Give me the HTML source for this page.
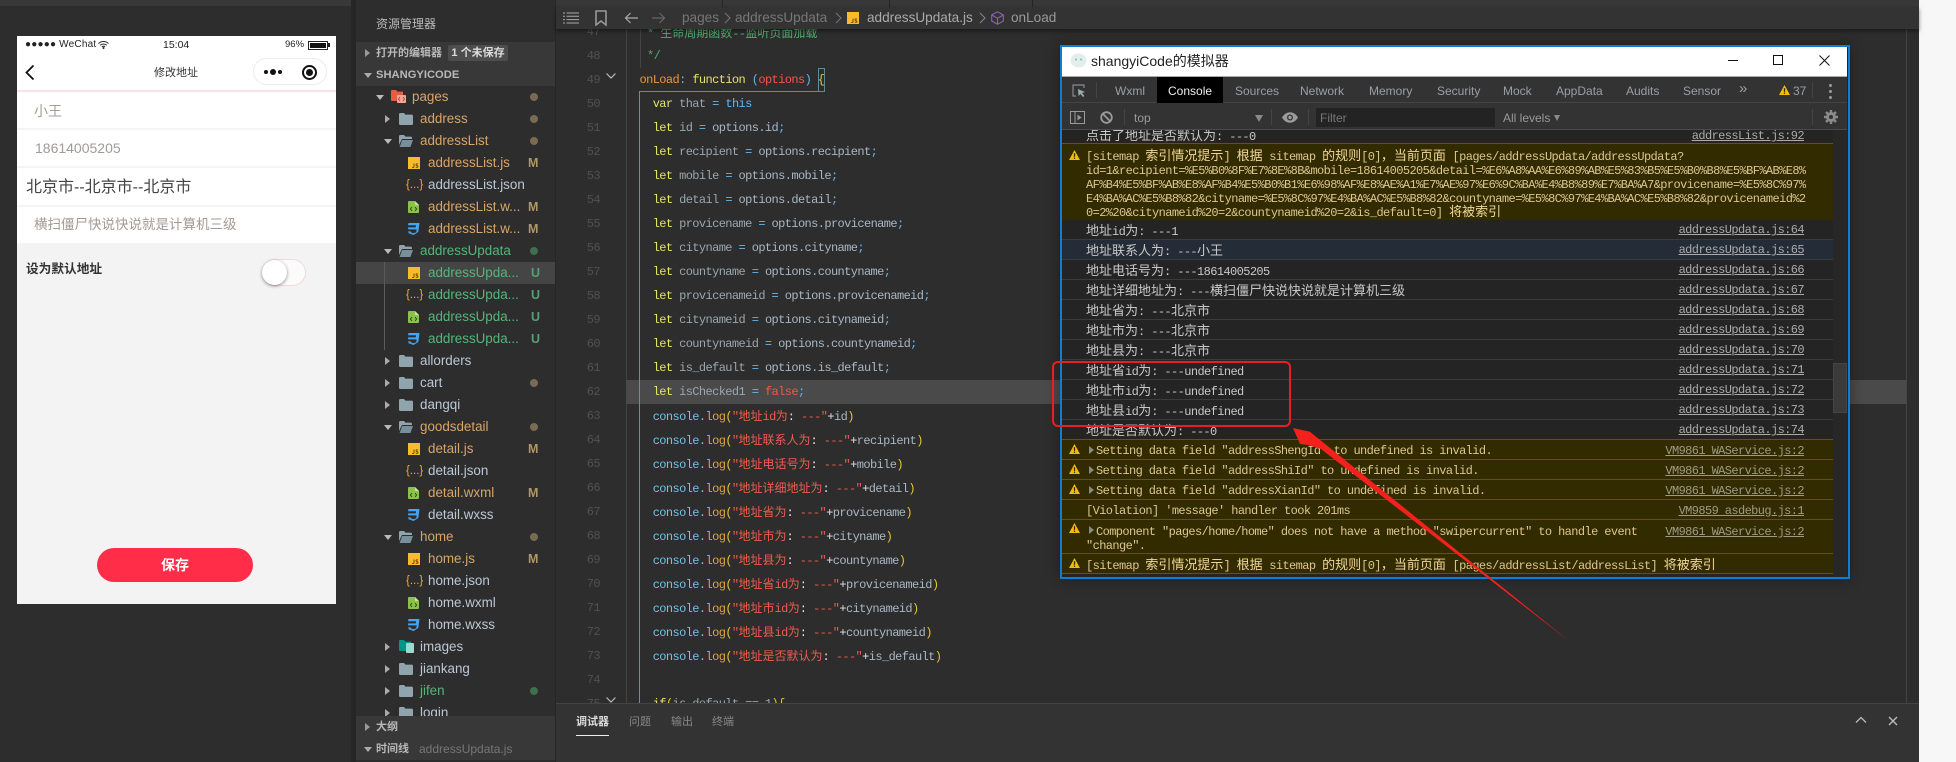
<!DOCTYPE html>
<html><head><meta charset="utf-8"><title>shangyiCode</title>
<style>
html,body{margin:0;padding:0}
body{width:1956px;height:762px;position:relative;overflow:hidden;background:#2d2d2d;font-family:"Liberation Sans","Noto Sans CJK SC",sans-serif}
div,span.a,svg.a{position:absolute}
i{font-style:normal;letter-spacing:0;font-family:"Noto Sans CJK SC",sans-serif}
.nw{white-space:nowrap}
.pt{white-space:nowrap;line-height:20px;height:20px}
.r{left:0;width:199px;height:22px;line-height:22px;font-size:13.4px;white-space:nowrap;color:#bcc8d6}
.r span{position:absolute;top:0}
.r svg{position:absolute}
.t{color:#d9a566}.g{color:#55b67c}
.dot{position:absolute;left:174px;top:7px;width:8px;height:8px;border-radius:4px;background:#7b6a52}
.dg{background:#3f6f4c}
.M{position:absolute;left:172px;top:0;font-weight:bold;color:#ae9768;font-size:12.5px}
.U{position:absolute;left:175px;top:0;font-weight:bold;color:#56a078;font-size:12.5px}
.arr{position:absolute;width:0;height:0;border-left:5px solid #aaa;border-top:4px solid transparent;border-bottom:4px solid transparent;top:7px}
.arrd{position:absolute;width:0;height:0;border-top:5px solid #bbb;border-left:4px solid transparent;border-right:4px solid transparent;top:9px}
.r span.jn{position:absolute;color:#f0ad1e;font-family:"Liberation Sans",sans-serif;font-size:11.5px;top:0}
.ln{left:560px;width:40px;text-align:right;height:24px;font:12px/24px "Liberation Mono",monospace;color:#515151;letter-spacing:-.6px}
.c{left:0;height:24px;white-space:pre;font:12px/24px "Liberation Mono",monospace;letter-spacing:-.6px;color:#9aa7ae}
.c i{font-size:12px}
.k{color:#e6e36a}.o{color:#a9b7c4}.h{color:#63b6f0}.cn{color:#6cc3ea}.l{color:#e8a13c}.s,.s i{color:#f05c50}.p{color:#e7c531}.w{color:#e4e4e4}.f{color:#f0953d}.q{color:#f05a44}.cm,.cm i{color:#4fae6c}
.cr{left:1062px;width:771px;height:19px;border-bottom:1px solid #3b3b3b;background:#242424;color:#c8c8c8;font:12px/20px "Liberation Mono",monospace;letter-spacing:-.6px;white-space:pre;overflow:hidden}
.cr i{font-size:13px}
.cr b{font-weight:normal;position:absolute;left:24px;top:0}
.cr u{position:absolute;right:29px;top:0;color:#ababab}
.yr{background:#332b00;border-bottom:1px solid #665500;color:#dcc68f}
.yr u{color:#9e9a86}
.yr i{color:#f0d796}
.yr b.x{left:34px}
.yb i{line-height:0}
.tri{position:absolute;left:7px;top:4px}
.ma{position:absolute;left:27px;top:6px;width:0;height:0;border-left:5px solid #8a8a80;border-top:4px solid transparent;border-bottom:4px solid transparent}
.ct{top:81px;height:20px;line-height:20px;font-size:12px;color:#98a0a6;white-space:nowrap}
.hd{font-size:11px;color:#b8b8b8;font-weight:bold}
</style></head>
<body>
<svg width="0" height="0" style="position:absolute">
<defs>
<symbol id="fc" viewBox="0 0 14 12"><path d="M0 1.2C0 .5.5 0 1.2 0H5l1.4 1.6h6.4c.7 0 1.2.5 1.2 1.2v8c0 .7-.5 1.2-1.2 1.2H1.2C.5 12 0 11.5 0 10.8z" fill="#90a4ae"/></symbol>
<symbol id="fo" viewBox="0 0 14 12"><path d="M0 1.2C0 .5.5 0 1.2 0H5l1.4 1.6h5.4c.7 0 1.2.5 1.2 1.2V4H3L0 10z" fill="#90a4ae"/><path d="M3.2 5H14l-2.6 7H.6z" fill="#78909c"/></symbol>
<symbol id="js" viewBox="0 0 12 12"><rect width="12" height="12" fill="#f9bb2d"/><path d="M6 6.5v3.3c0 .8-1.2 1-1.8.4M10 7.2c-.8-.7-2-.4-2 .5 0 1 2 .8 2 1.8 0 .9-1.4 1.1-2.2.4" fill="none" stroke="#5a4300" stroke-width=".9"/></symbol>
<symbol id="xm" viewBox="0 0 11 12"><path d="M1 0h6l4 4v7c0 .6-.4 1-1 1H1c-.6 0-1-.4-1-1V1c0-.6.4-1 1-1z" fill="#8bc34a"/><path d="M7 0v4h4z" fill="#c5e1a5"/><path d="M4 6L2.4 8 4 10M7 6l1.6 2L7 10" fill="none" stroke="#2f4a16" stroke-width="1"/></symbol>
<symbol id="xs" viewBox="0 0 13 12"><path d="M1.5 0h11l-1.2 9L6.5 12 1.6 10.3l-.3-2h2.2l.1 1 2.8.9 2.9-1 .3-2.8H1.2L1 4.4h7.8l.2-2.2H1z" fill="#42a5f5"/></symbol>
<symbol id="wt" viewBox="0 0 12 11"><path d="M6 0l6 11H0z" fill="#f4bd00"/><rect x="5.3" y="3.5" width="1.4" height="4" fill="#332b00"/><rect x="5.3" y="8.3" width="1.4" height="1.5" fill="#332b00"/></symbol>
</defs>
</svg>

<!-- top strip -->
<div style="left:0;top:0;width:1919px;height:6px;background:#383838"></div>
<div style="left:1919px;top:0;width:37px;height:762px;background:#f7f7f7"></div>
<div style="left:351px;top:0;width:5px;height:762px;background:#262626"></div>

<!-- phone -->
<div style="left:17px;top:36px;width:319px;height:568px;background:#f3f3f3;overflow:hidden">
  <div style="left:0;top:0;width:319px;height:207px;background:#fff"></div>
  <div class="pt" style="left:8px;top:-1px;font-size:10px;color:#222;letter-spacing:.2px">●●●●● WeChat</div>
  <svg class="a" style="left:81px;top:5px" width="11" height="8" viewBox="0 0 11 8"><path d="M.5 2.5C3.5-.3 7.5-.3 10.5 2.5M2.2 4.2C4 2.6 7 2.6 8.8 4.2M3.9 5.8C4.7 5 6.3 5 7.1 5.8" fill="none" stroke="#222" stroke-width="1"/><circle cx="5.5" cy="7" r="1" fill="#222"/></svg>
  <div class="pt" style="left:146px;top:-1px;font-size:10.5px;color:#222">15:04</div>
  <div class="pt" style="left:268px;top:-1px;font-size:9.5px;color:#222">96%</div>
  <div style="left:291px;top:5px;width:18px;height:7px;border:1px solid #222;background:#111;box-shadow:inset 0 0 0 1px #fff"></div>
  <div style="left:311px;top:7px;width:2px;height:4px;background:#222"></div>
  <div style="left:0;top:17px;width:319px;height:37px;border-bottom:2px solid #f9e3e6;box-sizing:content-box"></div>
  <svg class="a" style="left:8px;top:28px" width="10" height="17" viewBox="0 0 10 17"><path d="M8.5 1.5L1.5 8.5l7 7" fill="none" stroke="#111" stroke-width="1.8"/></svg>
  <div class="pt" style="left:137px;top:27px;font-size:11px;color:#333">修改地址</div>
  <div style="left:236px;top:22px;width:72px;height:25px;border:1px solid #ececec;border-radius:14px"></div>
  <div style="left:247px;top:34px;width:4px;height:4px;border-radius:3px;background:#111"></div>
  <div style="left:253px;top:33px;width:6px;height:6px;border-radius:3px;background:#111"></div>
  <div style="left:261px;top:34px;width:4px;height:4px;border-radius:3px;background:#111"></div>
  <div style="left:285px;top:29px;width:11px;height:11px;border:2px solid #111;border-radius:50%"></div>
  <div style="left:289px;top:33px;width:7px;height:7px;border-radius:50%;background:#111"></div>
  <div class="pt" style="left:17px;top:65px;font-size:14px;color:#a89c96">小王</div>
  <div style="left:0;top:92px;width:319px;height:2px;background:#f5f3f3"></div>
  <div class="pt" style="left:18px;top:102px;font-size:14px;color:#a09a98">18614005205</div>
  <div style="left:0;top:130px;width:319px;height:2px;background:#f5f3f3"></div>
  <div class="pt" style="left:9px;top:142px;font-size:16px;color:#444">北京市--北京市--北京市</div>
  <div style="left:0;top:169px;width:319px;height:2px;background:#f5f3f3"></div>
  <div class="pt" style="left:17px;top:179px;font-size:13.5px;color:#a39a94">横扫僵尸快说快说就是计算机三级</div>
  <div class="pt" style="left:9px;top:223px;font-size:12.7px;font-weight:bold;color:#333">设为默认地址</div>
  <div style="left:245px;top:223px;width:42px;height:25px;border:1px solid #f2dada;border-radius:14px;background:#fbfbfb"></div>
  <div style="left:245px;top:224px;width:25px;height:25px;border-radius:50%;background:#fff;box-shadow:0 1px 3px rgba(0,0,0,.45)"></div>
  <div style="left:80px;top:512px;width:156px;height:34px;border-radius:17px;background:#ff2d48;color:#fff;font-size:14px;font-weight:bold;text-align:center;line-height:34px">保存</div>
</div>

<!-- sidebar -->
<div style="left:356px;top:0;width:199px;height:760px;background:#2d2d2d;overflow:hidden">
  <div class="nw" style="left:20px;top:14px;font-size:12px;line-height:20px;color:#bbb">资源管理器</div>
  <div style="left:0;top:42px;width:199px;height:44px;background:#383838"></div>
  <div class="r hd" style="top:42px"><div class="arr" style="left:9px;border-left-color:#999"></div><span style="left:20px">打开的编辑器</span><span style="left:92px;top:3px;height:16px;line-height:16px;width:60px;text-align:center;background:#4d4d4d;border-radius:2px;color:#ddd">1 个未保存</span></div>
  <div class="r" style="top:64px;font-size:11.2px;color:#b8b8b8;font-weight:bold"><div class="arrd" style="left:8px;border-top-color:#aaa"></div><span style="left:20px">SHANGYICODE</span></div>

  <div class="r t" style="top:86px"><div class="arrd" style="left:20px"></div><svg style="left:35px;top:4px" width="15" height="13" viewBox="0 0 15 13"><path d="M0 1c0-.6.4-1 1-1h4l1.5 1.6H12V11H1c-.6 0-1-.4-1-1z" fill="#e2603f"/><rect x="6" y="5" width="9" height="8" rx="1" fill="#f6a598"/><path d="M9 7L7.5 9 9 11M12 7l1.5 2L12 11" fill="none" stroke="#c33" stroke-width=".9"/></svg><span style="left:56px">pages</span><div class="dot"></div></div>
  <div class="r t" style="top:108px"><div class="arr" style="left:29px"></div><svg style="left:43px;top:5px" width="14" height="12"><use href="#fc"/></svg><span style="left:64px">address</span><div class="dot"></div></div>
  <div class="r t" style="top:130px"><div class="arrd" style="left:28px"></div><svg style="left:43px;top:5px" width="14" height="12"><use href="#fo"/></svg><span style="left:64px">addressList</span><div class="dot"></div></div>
  <div class="r t" style="top:152px"><svg style="left:52px;top:5px" width="12" height="12"><use href="#js"/></svg><span style="left:72px">addressList.js</span><b class="M">M</b></div>
  <div class="r" style="top:174px"><span class="jn" style="left:50px">{...}</span><span style="left:72px">addressList.json</span></div>
  <div class="r t" style="top:196px"><svg style="left:52px;top:5px" width="11" height="12"><use href="#xm"/></svg><span style="left:72px">addressList.w...</span><b class="M">M</b></div>
  <div class="r t" style="top:218px"><svg style="left:51px;top:5px" width="13" height="12"><use href="#xs"/></svg><span style="left:72px">addressList.w...</span><b class="M">M</b></div>
  <div class="r g" style="top:240px"><div class="arrd" style="left:28px"></div><svg style="left:43px;top:5px" width="14" height="12"><use href="#fo"/></svg><span style="left:64px">addressUpdata</span><div class="dot dg"></div></div>
  <div class="r g" style="top:262px;background:#454545"><svg style="left:52px;top:5px" width="12" height="12"><use href="#js"/></svg><span style="left:72px">addressUpda...</span><b class="U">U</b></div>
  <div class="r g" style="top:284px"><span class="jn" style="left:50px">{...}</span><span style="left:72px">addressUpda...</span><b class="U">U</b></div>
  <div class="r g" style="top:306px"><svg style="left:52px;top:5px" width="11" height="12"><use href="#xm"/></svg><span style="left:72px">addressUpda...</span><b class="U">U</b></div>
  <div class="r g" style="top:328px"><svg style="left:51px;top:5px" width="13" height="12"><use href="#xs"/></svg><span style="left:72px">addressUpda...</span><b class="U">U</b></div>
  <div style="left:28px;top:262px;width:1px;height:88px;background:#5a5a5a"></div>
  <div class="r" style="top:350px"><div class="arr" style="left:29px"></div><svg style="left:43px;top:5px" width="14" height="12"><use href="#fc"/></svg><span style="left:64px">allorders</span></div>
  <div class="r" style="top:372px"><div class="arr" style="left:29px"></div><svg style="left:43px;top:5px" width="14" height="12"><use href="#fc"/></svg><span style="left:64px">cart</span><div class="dot"></div></div>
  <div class="r" style="top:394px"><div class="arr" style="left:29px"></div><svg style="left:43px;top:5px" width="14" height="12"><use href="#fc"/></svg><span style="left:64px">dangqi</span></div>
  <div class="r t" style="top:416px"><div class="arrd" style="left:28px"></div><svg style="left:43px;top:5px" width="14" height="12"><use href="#fo"/></svg><span style="left:64px">goodsdetail</span><div class="dot"></div></div>
  <div class="r t" style="top:438px"><svg style="left:52px;top:5px" width="12" height="12"><use href="#js"/></svg><span style="left:72px">detail.js</span><b class="M">M</b></div>
  <div class="r" style="top:460px"><span class="jn" style="left:50px">{...}</span><span style="left:72px">detail.json</span></div>
  <div class="r t" style="top:482px"><svg style="left:52px;top:5px" width="11" height="12"><use href="#xm"/></svg><span style="left:72px">detail.wxml</span><b class="M">M</b></div>
  <div class="r" style="top:504px"><svg style="left:51px;top:5px" width="13" height="12"><use href="#xs"/></svg><span style="left:72px">detail.wxss</span></div>
  <div class="r t" style="top:526px"><div class="arrd" style="left:28px"></div><svg style="left:43px;top:5px" width="14" height="12"><use href="#fo"/></svg><span style="left:64px">home</span><div class="dot"></div></div>
  <div class="r t" style="top:548px"><svg style="left:52px;top:5px" width="12" height="12"><use href="#js"/></svg><span style="left:72px">home.js</span><b class="M">M</b></div>
  <div class="r" style="top:570px"><span class="jn" style="left:50px">{...}</span><span style="left:72px">home.json</span></div>
  <div class="r" style="top:592px"><svg style="left:52px;top:5px" width="11" height="12"><use href="#xm"/></svg><span style="left:72px">home.wxml</span></div>
  <div class="r" style="top:614px"><svg style="left:51px;top:5px" width="13" height="12"><use href="#xs"/></svg><span style="left:72px">home.wxss</span></div>
  <div class="r" style="top:636px"><div class="arr" style="left:29px"></div><svg style="left:43px;top:4px" width="15" height="13" viewBox="0 0 15 13"><path d="M0 1c0-.6.4-1 1-1h4l1.5 1.6H12V11H1c-.6 0-1-.4-1-1z" fill="#009688"/><rect x="7" y="3" width="8" height="10" rx="1" fill="#9fd8d0"/></svg><span style="left:64px">images</span></div>
  <div class="r" style="top:658px"><div class="arr" style="left:29px"></div><svg style="left:43px;top:5px" width="14" height="12"><use href="#fc"/></svg><span style="left:64px">jiankang</span></div>
  <div class="r g" style="top:680px"><div class="arr" style="left:29px"></div><svg style="left:43px;top:5px" width="14" height="12"><use href="#fc"/></svg><span style="left:64px">jifen</span><div class="dot dg"></div></div>
  <div class="r" style="top:702px"><div class="arr" style="left:29px"></div><svg style="left:43px;top:5px" width="14" height="12"><use href="#fc"/></svg><span style="left:64px">login</span></div>
  <div style="left:0;top:716px;width:199px;height:44px;background:#383838"></div>
  <div class="r hd" style="top:716px"><div class="arr" style="left:9px;border-left-color:#999"></div><span style="left:20px">大纲</span></div>
  <div class="r hd" style="top:738px"><div class="arrd" style="left:8px;border-top-color:#aaa"></div><span style="left:20px">时间线</span><span style="left:63px;font-weight:normal;color:#777;font-size:12px">addressUpdata.js</span></div>
</div>
<div style="left:555px;top:0;width:1px;height:762px;background:#262626"></div>

<!-- editor -->
<div style="left:556px;top:0;width:1363px;height:703px;background:#2d2d2d;overflow:hidden">
  <div style="left:70px;top:0;width:1px;height:703px;background:#444"></div>
  <div style="left:1350px;top:0;width:1px;height:703px;background:#444"></div>
  <div style="left:70px;top:380px;width:1280px;height:24px;background:#4a4a4a"></div>
  <div style="left:83px;top:91px;width:1px;height:612px;background:#5b93b4"></div>
  <div style="left:84px;top:29px;width:1px;height:39px;background:#444"></div>
  <div style="left:84px;top:91px;width:184px;height:1px;background:#5b8a9c"></div>
  <div style="left:262px;top:68px;width:5px;height:23px;border:1px solid #5b8a9c;border-bottom:0"></div>
  <svg class="a" style="left:49px;top:72px" width="12" height="8" viewBox="0 0 12 8"><path d="M1.5 1.5L6 6l4.5-4.5" fill="none" stroke="#bbb" stroke-width="1.2"/></svg>
  <svg class="a" style="left:49px;top:696px" width="12" height="8" viewBox="0 0 12 8"><path d="M1.5 1.5L6 6l4.5-4.5" fill="none" stroke="#bbb" stroke-width="1.2"/></svg>
</div>
<div class="ln" style="top:20px">47</div>
<div class="ln" style="top:44px">48</div>
<div class="ln" style="top:68px">49</div>
<div class="ln" style="top:92px">50</div>
<div class="ln" style="top:116px">51</div>
<div class="ln" style="top:140px">52</div>
<div class="ln" style="top:164px">53</div>
<div class="ln" style="top:188px">54</div>
<div class="ln" style="top:212px">55</div>
<div class="ln" style="top:236px">56</div>
<div class="ln" style="top:260px">57</div>
<div class="ln" style="top:284px">58</div>
<div class="ln" style="top:308px">59</div>
<div class="ln" style="top:332px">60</div>
<div class="ln" style="top:356px">61</div>
<div class="ln" style="top:380px">62</div>
<div class="ln" style="top:404px">63</div>
<div class="ln" style="top:428px">64</div>
<div class="ln" style="top:452px">65</div>
<div class="ln" style="top:476px">66</div>
<div class="ln" style="top:500px">67</div>
<div class="ln" style="top:524px">68</div>
<div class="ln" style="top:548px">69</div>
<div class="ln" style="top:572px">70</div>
<div class="ln" style="top:596px">71</div>
<div class="ln" style="top:620px">72</div>
<div class="ln" style="top:644px">73</div>
<div class="ln" style="top:668px">74</div>
<div class="ln" style="top:692px">75</div>

<div class="c cm" style="left:647px;top:21px">* <i>生命周期函数</i>--<i>监听页面加载</i></div>
<div class="c cm" style="left:647px;top:44px">*/</div>
<div class="c" style="left:639.5px;top:68px"><span class="f">onLoad</span><span class="h">:</span> <span class="k">function</span> <span class="h">(</span><span class="q">options</span><span class="h">)</span> <span class="p">{</span></div>
<div class="c" style="left:652.7px;top:92px"><span class="k">var</span> <span>that</span> <span class="h">=</span> <span class="h">this</span></div>
<div class="c" style="left:652.7px;top:116px"><span class="k">let</span> id <span class="h">=</span> <span class="o">options.id</span><span class="h">;</span></div>
<div class="c" style="left:652.7px;top:140px"><span class="k">let</span> recipient <span class="h">=</span> <span class="o">options.recipient</span><span class="h">;</span></div>
<div class="c" style="left:652.7px;top:164px"><span class="k">let</span> mobile <span class="h">=</span> <span class="o">options.mobile</span><span class="h">;</span></div>
<div class="c" style="left:652.7px;top:188px"><span class="k">let</span> detail <span class="h">=</span> <span class="o">options.detail</span><span class="h">;</span></div>
<div class="c" style="left:652.7px;top:212px"><span class="k">let</span> provicename <span class="h">=</span> <span class="o">options.provicename</span><span class="h">;</span></div>
<div class="c" style="left:652.7px;top:236px"><span class="k">let</span> cityname <span class="h">=</span> <span class="o">options.cityname</span><span class="h">;</span></div>
<div class="c" style="left:652.7px;top:260px"><span class="k">let</span> countyname <span class="h">=</span> <span class="o">options.countyname</span><span class="h">;</span></div>
<div class="c" style="left:652.7px;top:284px"><span class="k">let</span> provicenameid <span class="h">=</span> <span class="o">options.provicenameid</span><span class="h">;</span></div>
<div class="c" style="left:652.7px;top:308px"><span class="k">let</span> citynameid <span class="h">=</span> <span class="o">options.citynameid</span><span class="h">;</span></div>
<div class="c" style="left:652.7px;top:332px"><span class="k">let</span> countynameid <span class="h">=</span> <span class="o">options.countynameid</span><span class="h">;</span></div>
<div class="c" style="left:652.7px;top:356px"><span class="k">let</span> is_default <span class="h">=</span> <span class="o">options.is_default</span><span class="h">;</span></div>
<div class="c" style="left:652.7px;top:380px"><span class="k">let</span> isChecked1 <span class="h">=</span> <span class="q">false</span><span class="h">;</span></div>
<div class="c" style="left:652.7px;top:404px"><span class="cn">console.</span><span class="l">log</span><span class="p">(</span><span class="s">"<i>地址</i>id<i>为</i></span><span class="w">: </span><span class="s">---"</span><span class="w">+</span><span class="o">id</span><span class="p">)</span></div>
<div class="c" style="left:652.7px;top:428px"><span class="cn">console.</span><span class="l">log</span><span class="p">(</span><span class="s">"<i>地址联系人为</i></span><span class="w">: </span><span class="s">---"</span><span class="w">+</span><span class="o">recipient</span><span class="p">)</span></div>
<div class="c" style="left:652.7px;top:452px"><span class="cn">console.</span><span class="l">log</span><span class="p">(</span><span class="s">"<i>地址电话号为</i></span><span class="w">: </span><span class="s">---"</span><span class="w">+</span><span class="o">mobile</span><span class="p">)</span></div>
<div class="c" style="left:652.7px;top:476px"><span class="cn">console.</span><span class="l">log</span><span class="p">(</span><span class="s">"<i>地址详细地址为</i></span><span class="w">: </span><span class="s">---"</span><span class="w">+</span><span class="o">detail</span><span class="p">)</span></div>
<div class="c" style="left:652.7px;top:500px"><span class="cn">console.</span><span class="l">log</span><span class="p">(</span><span class="s">"<i>地址省为</i></span><span class="w">: </span><span class="s">---"</span><span class="w">+</span><span class="o">provicename</span><span class="p">)</span></div>
<div class="c" style="left:652.7px;top:524px"><span class="cn">console.</span><span class="l">log</span><span class="p">(</span><span class="s">"<i>地址市为</i></span><span class="w">: </span><span class="s">---"</span><span class="w">+</span><span class="o">cityname</span><span class="p">)</span></div>
<div class="c" style="left:652.7px;top:548px"><span class="cn">console.</span><span class="l">log</span><span class="p">(</span><span class="s">"<i>地址县为</i></span><span class="w">: </span><span class="s">---"</span><span class="w">+</span><span class="o">countyname</span><span class="p">)</span></div>
<div class="c" style="left:652.7px;top:572px"><span class="cn">console.</span><span class="l">log</span><span class="p">(</span><span class="s">"<i>地址省</i>id<i>为</i></span><span class="w">: </span><span class="s">---"</span><span class="w">+</span><span class="o">provicenameid</span><span class="p">)</span></div>
<div class="c" style="left:652.7px;top:596px"><span class="cn">console.</span><span class="l">log</span><span class="p">(</span><span class="s">"<i>地址市</i>id<i>为</i></span><span class="w">: </span><span class="s">---"</span><span class="w">+</span><span class="o">citynameid</span><span class="p">)</span></div>
<div class="c" style="left:652.7px;top:620px"><span class="cn">console.</span><span class="l">log</span><span class="p">(</span><span class="s">"<i>地址县</i>id<i>为</i></span><span class="w">: </span><span class="s">---"</span><span class="w">+</span><span class="o">countynameid</span><span class="p">)</span></div>
<div class="c" style="left:652.7px;top:644px"><span class="cn">console.</span><span class="l">log</span><span class="p">(</span><span class="s">"<i>地址是否默认为</i></span><span class="w">: </span><span class="s">---"</span><span class="w">+</span><span class="o">is_default</span><span class="p">)</span></div>
<div class="c" style="left:652.7px;top:692px"><span class="k">if</span><span class="p">(</span>is_default <span class="h">==</span> 1<span class="p">){</span></div>

<!-- breadcrumb bar -->
<div style="left:556px;top:0;width:1363px;height:7px;background:#383838"></div>
<div style="left:722px;top:0;width:1px;height:7px;background:#252525"></div>
<div style="left:889px;top:0;width:1px;height:7px;background:#252525"></div>
<div style="left:1032px;top:0;width:1px;height:7px;background:#252525"></div>
<div style="left:556px;top:7px;width:1363px;height:22px;background:#333;box-shadow:0 2px 4px rgba(0,0,0,.45)"></div>
<svg class="a" style="left:563px;top:12px" width="16" height="12" viewBox="0 0 16 12"><path d="M0 1h2M3.5 1H16M0 4.3h2M3.5 4.3H16M0 7.6h2M3.5 7.6H16M0 11h2M3.5 11H16" stroke="#aaa" stroke-width="1"/></svg>
<svg class="a" style="left:595px;top:10px" width="12" height="16" viewBox="0 0 12 16"><path d="M1 1h10v14L6 11l-5 4z" fill="none" stroke="#999" stroke-width="1.6"/></svg>
<svg class="a" style="left:624px;top:12px" width="14" height="12" viewBox="0 0 14 12"><path d="M14 6H1.5M6.5 1L1.5 6l5 5" fill="none" stroke="#aaa" stroke-width="1.2"/></svg>
<svg class="a" style="left:652px;top:12px" width="14" height="12" viewBox="0 0 14 12"><path d="M0 6h12.5M7.5 1l5 5-5 5" fill="none" stroke="#666" stroke-width="1.2"/></svg>
<div class="nw" style="left:682px;top:8px;font-size:13.6px;line-height:20px;color:#777">pages</div>
<svg class="a" style="left:724px;top:12px" width="7" height="12" viewBox="0 0 7 12"><path d="M1 1l5 5-5 5" fill="none" stroke="#777"/></svg>
<div class="nw" style="left:735px;top:8px;font-size:13.6px;line-height:20px;color:#777">addressUpdata</div>
<svg class="a" style="left:835px;top:12px" width="7" height="12" viewBox="0 0 7 12"><path d="M1 1l5 5-5 5" fill="none" stroke="#777"/></svg>
<svg class="a" style="left:847px;top:12px" width="12" height="12"><use href="#js"/></svg>
<div class="nw" style="left:867px;top:8px;font-size:13.6px;line-height:20px;color:#aaa">addressUpdata.js</div>
<svg class="a" style="left:979px;top:12px" width="7" height="12" viewBox="0 0 7 12"><path d="M1 1l5 5-5 5" fill="none" stroke="#888"/></svg>
<svg class="a" style="left:991px;top:11px" width="13" height="14" viewBox="0 0 13 14"><path d="M6.5 .7L12.3 4v6l-5.8 3.3L.7 10V4zM.7 4l5.8 3.3L12.3 4M6.5 7.3v6" fill="none" stroke="#8a63b8" stroke-width="1.1"/></svg>
<div class="nw" style="left:1011px;top:8px;font-size:13.6px;line-height:20px;color:#999">onLoad</div>

<!-- bottom panel -->
<div style="left:556px;top:703px;width:1363px;height:59px;background:#333;border-top:1px solid #444;box-sizing:border-box"></div>
<div class="nw" style="left:576px;top:712px;font-size:11px;line-height:20px;color:#ddd;font-weight:bold">调试器</div>
<div style="left:576px;top:735px;width:33px;height:1px;background:#eee"></div>
<div class="nw" style="left:629px;top:712px;font-size:11px;line-height:20px;color:#888">问题</div>
<div class="nw" style="left:671px;top:712px;font-size:11px;line-height:20px;color:#888">输出</div>
<div class="nw" style="left:712px;top:712px;font-size:11px;line-height:20px;color:#888">终端</div>
<svg class="a" style="left:1855px;top:716px" width="12" height="8" viewBox="0 0 12 8"><path d="M1 6.5L6 1.5l5 5" fill="none" stroke="#bbb" stroke-width="1.3"/></svg>
<svg class="a" style="left:1888px;top:716px" width="10" height="10" viewBox="0 0 10 10"><path d="M1 1l8 8M9 1L1 9" stroke="#bbb" stroke-width="1.4"/></svg>

<!-- simulator window -->
<div style="left:1060px;top:45px;width:790px;height:534px;box-sizing:border-box;border:2px solid #0f7dd6;background:#242424;box-shadow:0 0 12px rgba(0,0,0,.35)"></div>
<div style="left:1062px;top:47px;width:785px;height:29px;background:#fff"></div>
<svg class="a" style="left:1070px;top:53px" width="17" height="16" viewBox="0 0 17 16"><ellipse cx="8.5" cy="7.5" rx="8" ry="7" fill="#e4ecec"/><circle cx="6" cy="6.5" r="1" fill="#6c9"/><circle cx="11" cy="6.5" r="1" fill="#6c9"/></svg>
<div class="nw" style="left:1091px;top:51px;font-size:14px;line-height:20px;color:#222">shangyiCode<span>的模拟器</span></div>
<div style="left:1728px;top:60px;width:10px;height:1px;background:#111"></div>
<div style="left:1773px;top:55px;width:8px;height:8px;border:1px solid #111"></div>
<svg class="a" style="left:1819px;top:55px" width="11" height="11" viewBox="0 0 11 11"><path d="M.5.5l10 10M10.500.5l-10 10" stroke="#111"/></svg>
<div style="left:1062px;top:76px;width:785px;height:27px;background:#333;border-top:1px solid #aaa;box-sizing:border-box;border-bottom:1px solid #444"></div>
<svg class="a" style="left:1072px;top:84px" width="14" height="14" viewBox="0 0 14 14"><path d="M4 12H1V1h11v3" fill="none" stroke="#8a8a8a" stroke-width="1.2"/><path d="M6 5l7 3-3 1 2.5 3-1.5 1-2.5-3-2 2z" fill="#9aa"/></svg>
<div style="left:1096px;top:82px;width:1px;height:16px;background:#444"></div>
<div style="left:1157px;top:77px;width:66px;height:26px;background:#000"></div>
<div class="ct" style="left:1115px">Wxml</div>
<div class="ct" style="left:1168px;color:#eee">Console</div>
<div class="ct" style="left:1235px">Sources</div>
<div class="ct" style="left:1300px">Network</div>
<div class="ct" style="left:1369px">Memory</div>
<div class="ct" style="left:1437px">Security</div>
<div class="ct" style="left:1503px">Mock</div>
<div class="ct" style="left:1556px">AppData</div>
<div class="ct" style="left:1626px">Audits</div>
<div class="ct" style="left:1683px">Sensor</div>
<div class="ct" style="left:1739px;top:79px;font-size:15px">»</div>
<svg class="a" style="left:1779px;top:85px" width="11" height="10"><use href="#wt"/></svg>
<div class="ct" style="left:1793px">37</div>
<div style="left:1812px;top:82px;width:1px;height:16px;background:#444"></div>
<div style="left:1829px;top:84px;width:3px;height:3px;background:#999;border-radius:2px"></div>
<div style="left:1829px;top:90px;width:3px;height:3px;background:#999;border-radius:2px"></div>
<div style="left:1829px;top:96px;width:3px;height:3px;background:#999;border-radius:2px"></div>
<div style="left:1062px;top:103px;width:785px;height:27px;background:#333;border-bottom:1px solid #4a4a4a;box-sizing:border-box"></div>
<svg class="a" style="left:1070px;top:111px" width="15" height="13" viewBox="0 0 15 13"><rect x=".5" y=".5" width="14" height="12" fill="none" stroke="#9a9a9a"/><path d="M5 .5v12" stroke="#9a9a9a"/><path d="M7.5 3.5l4 3-4 3z" fill="#9a9a9a"/></svg>
<svg class="a" style="left:1100px;top:111px" width="13" height="13" viewBox="0 0 13 13"><circle cx="6.5" cy="6.5" r="5.3" fill="none" stroke="#9a9a9a" stroke-width="1.8"/><path d="M2.8 2.8l7.400 7.400" stroke="#9a9a9a" stroke-width="1.8"/></svg>
<div style="left:1124px;top:109px;width:1px;height:16px;background:#444"></div>
<div class="nw" style="left:1134px;top:108px;font-size:12px;line-height:20px;color:#999">top</div>
<div style="left:1255px;top:115px;width:0;height:0;border-top:7px solid #8a8a8a;border-left:4px solid transparent;border-right:4px solid transparent"></div>
<div style="left:1271px;top:109px;width:1px;height:16px;background:#444"></div>
<svg class="a" style="left:1282px;top:112px" width="16" height="11" viewBox="0 0 16 11"><path d="M0 5.5C4-1.5 12-1.5 16 5.5 12 12.5 4 12.5 0 5.5z" fill="#9a9a9a"/><circle cx="8" cy="5.5" r="3" fill="#333"/><circle cx="8" cy="5.5" r="1.7" fill="#9a9a9a"/></svg>
<div style="left:1308px;top:109px;width:1px;height:16px;background:#444"></div>
<div style="left:1316px;top:108px;width:179px;height:19px;background:#232323"></div>
<div class="nw" style="left:1320px;top:108px;font-size:12px;line-height:20px;color:#777">Filter</div>
<div class="nw" style="left:1503px;top:108px;font-size:12px;line-height:20px;color:#999">All levels</div>
<div style="left:1554px;top:115px;width:0;height:0;border-top:6px solid #8a8a8a;border-left:3.5px solid transparent;border-right:3.5px solid transparent"></div>
<div style="left:1812px;top:109px;width:1px;height:16px;background:#444"></div>
<svg class="a" style="left:1824px;top:110px" width="14" height="14" viewBox="0 0 14 14"><circle cx="7" cy="7" r="3.5" fill="none" stroke="#8a8a8a" stroke-width="3"/><path d="M7 0v3M7 11v3M0 7h3M11 7h3M2 2l2 2M10 10l2 2M12 2l-2 2M4 10l-2 2" stroke="#8a8a8a" stroke-width="2.4"/></svg>

<!-- console rows -->
<div class="cr" style="top:130px;height:13px;background:#242424;border-bottom:0"><b style="top:-5px"><i>点击了地址是否默认为</i>: ---0</b><u style="top:-4px">addressList.js:92</u></div>
<div class="cr yr yb" style="top:143px;height:76px;border-top:1px solid #665500;line-height:14px">
<svg class="tri" style="top:6px" width="11" height="10"><use href="#wt"/></svg>
<b style="top:6px">[sitemap <i>索引情况提示</i>] <i>根据</i> sitemap <i>的规则</i>[0]<i>，当前页面</i> [pages/addressUpdata/addressUpdata?
id=1&amp;recipient=%E5%B0%8F%E7%8E%8B&amp;mobile=18614005205&amp;detail=%E6%A8%AA%E6%89%AB%E5%83%B5%E5%B0%B8%E5%BF%AB%E8%
AF%B4%E5%BF%AB%E8%AF%B4%E5%B0%B1%E6%98%AF%E8%AE%A1%E7%AE%97%E6%9C%BA%E4%B8%89%E7%BA%A7&amp;provicename=%E5%8C%97%
E4%BA%AC%E5%B8%82&amp;cityname=%E5%8C%97%E4%BA%AC%E5%B8%82&amp;countyname=%E5%8C%97%E4%BA%AC%E5%B8%82&amp;provicenameid%2
0=2%20&amp;citynameid%20=2&amp;countynameid%20=2&amp;is_default=0] <i>将被索引</i></b></div>
<div class="cr" style="top:220px"><b><i>地址</i>id<i>为</i>: ---1</b><u>addressUpdata.js:64</u></div>
<div class="cr" style="top:240px;background:#242c38"><b><i>地址联系人为</i>: ---<i>小王</i></b><u>addressUpdata.js:65</u></div>
<div class="cr" style="top:260px"><b><i>地址电话号为</i>: ---18614005205</b><u>addressUpdata.js:66</u></div>
<div class="cr" style="top:280px"><b><i>地址详细地址为</i>: ---<i>横扫僵尸快说快说就是计算机三级</i></b><u>addressUpdata.js:67</u></div>
<div class="cr" style="top:300px"><b><i>地址省为</i>: ---<i>北京市</i></b><u>addressUpdata.js:68</u></div>
<div class="cr" style="top:320px"><b><i>地址市为</i>: ---<i>北京市</i></b><u>addressUpdata.js:69</u></div>
<div class="cr" style="top:340px"><b><i>地址县为</i>: ---<i>北京市</i></b><u>addressUpdata.js:70</u></div>
<div class="cr" style="top:360px"><b><i>地址省</i>id<i>为</i>: ---undefined</b><u>addressUpdata.js:71</u></div>
<div class="cr" style="top:380px"><b><i>地址市</i>id<i>为</i>: ---undefined</b><u>addressUpdata.js:72</u></div>
<div class="cr" style="top:400px"><b><i>地址县</i>id<i>为</i>: ---undefined</b><u>addressUpdata.js:73</u></div>
<div class="cr" style="top:420px"><b><i>地址是否默认为</i>: ---0</b><u>addressUpdata.js:74</u></div>
<div class="cr yr" style="top:439px;border-top:1px solid #665500"><svg class="tri" width="11" height="10"><use href="#wt"/></svg><span class="ma"></span><b class="x" style="top:1px">Setting data field "addressShengId" to undefined is invalid.</b><u style="top:1px">VM9861 WAService.js:2</u></div>
<div class="cr yr" style="top:460px"><svg class="tri" width="11" height="10"><use href="#wt"/></svg><span class="ma"></span><b class="x" style="top:1px">Setting data field "addressShiId" to undefined is invalid.</b><u style="top:1px">VM9861 WAService.js:2</u></div>
<div class="cr yr" style="top:480px"><svg class="tri" width="11" height="10"><use href="#wt"/></svg><span class="ma"></span><b class="x" style="top:1px">Setting data field "addressXianId" to undefined is invalid.</b><u style="top:1px">VM9861 WAService.js:2</u></div>
<div class="cr yr" style="top:500px"><b style="top:1px">[Violation] 'message' handler took 201ms</b><u style="top:1px">VM9859 asdebug.js:1</u></div>
<div class="cr yr" style="top:520px;height:33px;line-height:14px"><svg class="tri" style="top:3px" width="11" height="10"><use href="#wt"/></svg><span class="ma"></span><b class="x" style="top:5px">Component "pages/home/home" does not have a method "swipercurrent" to handle event</b><b style="top:19px">"change".</b><u style="top:5px">VM9861 WAService.js:2</u></div>
<div class="cr yr" style="top:554px"><svg class="tri" width="11" height="10"><use href="#wt"/></svg><b>[sitemap <i>索引情况提示</i>] <i>根据</i> sitemap <i>的规则</i>[0]<i>，当前页面</i> [pages/addressList/addressList] <i>将被索引</i></b></div>
<div style="left:1833px;top:130px;width:14px;height:447px;background:#272727"></div>
<div style="left:1833px;top:363px;width:14px;height:50px;background:#3a3a3a;border:1px solid #444;box-sizing:border-box"></div>

<!-- annotations -->
<div style="left:1052px;top:361px;width:235px;height:62px;border:2px solid #e81f1f;border-radius:6px"></div>
<svg class="a" style="left:0;top:0" width="1956" height="762" viewBox="0 0 1956 762"><polygon points="1293,428 1310,431.7 1569,641 1321,449 1308,445 1300,444" fill="#f2211c"/></svg>
</body></html>
